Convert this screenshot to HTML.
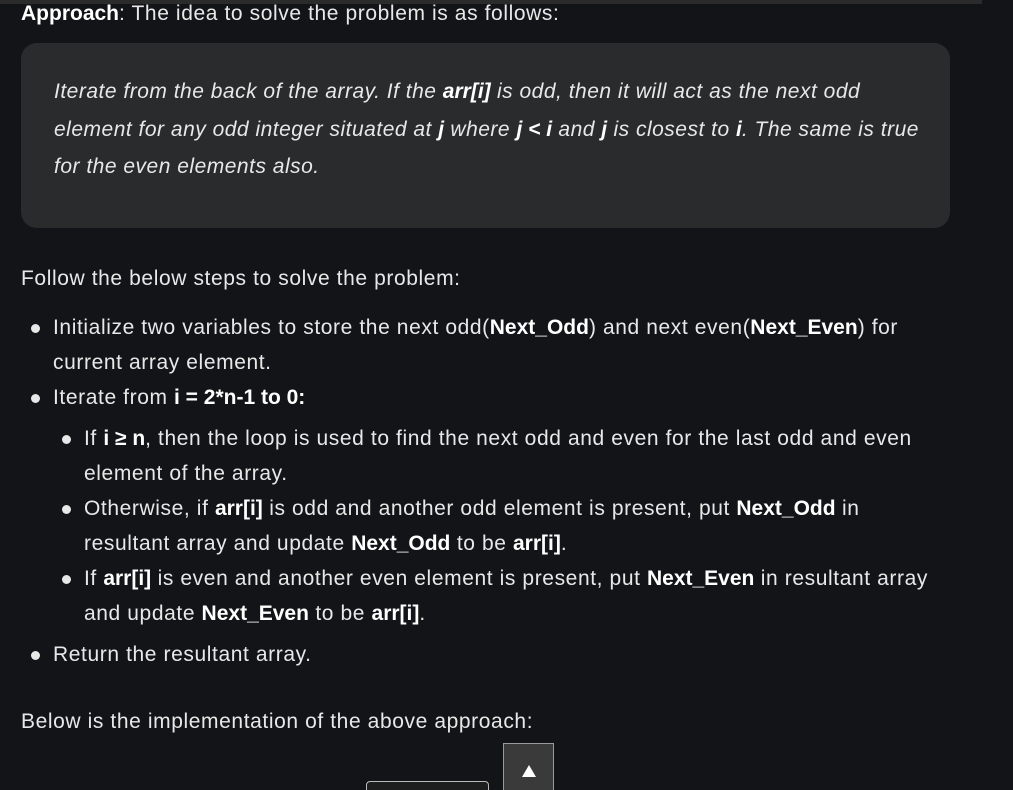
<!DOCTYPE html>
<html><head><meta charset="utf-8"><style>
html,body{margin:0;padding:0;background:#131417;width:1013px;height:790px;overflow:hidden;}
body{font-family:"Liberation Sans",sans-serif;color:#e8e8e8;font-size:21px;position:relative;}
.bar{position:absolute;left:0;top:0;width:982px;height:4px;background:#2b2b2c;}
.p{position:absolute;left:21px;white-space:nowrap;letter-spacing:0.6px;}
b{color:#fff;letter-spacing:0;}
.box{position:absolute;left:21px;top:43px;width:929px;height:185px;background:#2a2b2d;border-radius:16px;}
.box .l{position:absolute;left:33px;font-style:italic;white-space:nowrap;letter-spacing:0.5px;}
.li{position:absolute;white-space:nowrap;letter-spacing:0.6px;}
.dot{position:absolute;width:9px;height:9px;border-radius:50%;background:#e8e8e8;}
.btn{position:absolute;left:503px;top:743px;width:51px;height:50px;background:#3a3a3a;border:1px solid #9a9a9a;box-sizing:border-box;}
.tri{position:absolute;left:18px;top:21px;width:0;height:0;border-left:7px solid transparent;border-right:7px solid transparent;border-bottom:12px solid #fff;}
.sm{position:absolute;left:366px;top:781px;width:121px;height:20px;border:1px solid #bbb;border-radius:4px;background:#1e1e1e;}
</style></head><body>
<div class="bar"></div>
<div class="p" style="top:2px"><b>Approach</b>: The idea to solve the problem is as follows:</div>
<div class="box">
<div class="l" style="top:37px">Iterate from the back of the array. If the <b>arr[i]</b> is odd, then it will act as the next odd</div>
<div class="l" style="top:75px">element for any odd integer situated at <b>j</b> where <b>j &lt; i</b> and <b>j</b> is closest to <b>i</b>. The same is true</div>
<div class="l" style="top:112px">for the even elements also.</div>
</div>
<div class="p" style="top:267px">Follow the below steps to solve the problem:</div>
<div class="dot" style="left:31px;top:324px"></div>
<div class="li" style="left:53px;top:316px">Initialize two variables to store the next odd(<b>Next_Odd</b>) and next even(<b>Next_Even</b>) for</div>
<div class="li" style="left:53px;top:351px">current array element.</div>
<div class="dot" style="left:31px;top:394px"></div>
<div class="li" style="left:53px;top:386px">Iterate from <b>i = 2*n-1 to 0:</b></div>
<div class="dot" style="left:62px;top:435px"></div>
<div class="li" style="left:84px;top:427px">If <b>i ≥ n</b>, then the loop is used to find the next odd and even for the last odd and even</div>
<div class="li" style="left:84px;top:462px">element of the array.</div>
<div class="dot" style="left:62px;top:505px"></div>
<div class="li" style="left:84px;top:497px">Otherwise, if <b>arr[i]</b> is odd and another odd element is present, put <b>Next_Odd</b> in</div>
<div class="li" style="left:84px;top:532px">resultant array and update <b>Next_Odd</b> to be <b>arr[i]</b>.</div>
<div class="dot" style="left:62px;top:575px"></div>
<div class="li" style="left:84px;top:567px">If <b>arr[i]</b> is even and another even element is present, put <b>Next_Even</b> in resultant array</div>
<div class="li" style="left:84px;top:602px">and update <b>Next_Even</b> to be <b>arr[i]</b>.</div>
<div class="dot" style="left:31px;top:651px"></div>
<div class="li" style="left:53px;top:643px">Return the resultant array.</div>
<div class="p" style="top:710px">Below is the implementation of the above approach:</div>
<div class="sm"></div>
<div class="btn"><div class="tri"></div></div>
</body></html>
